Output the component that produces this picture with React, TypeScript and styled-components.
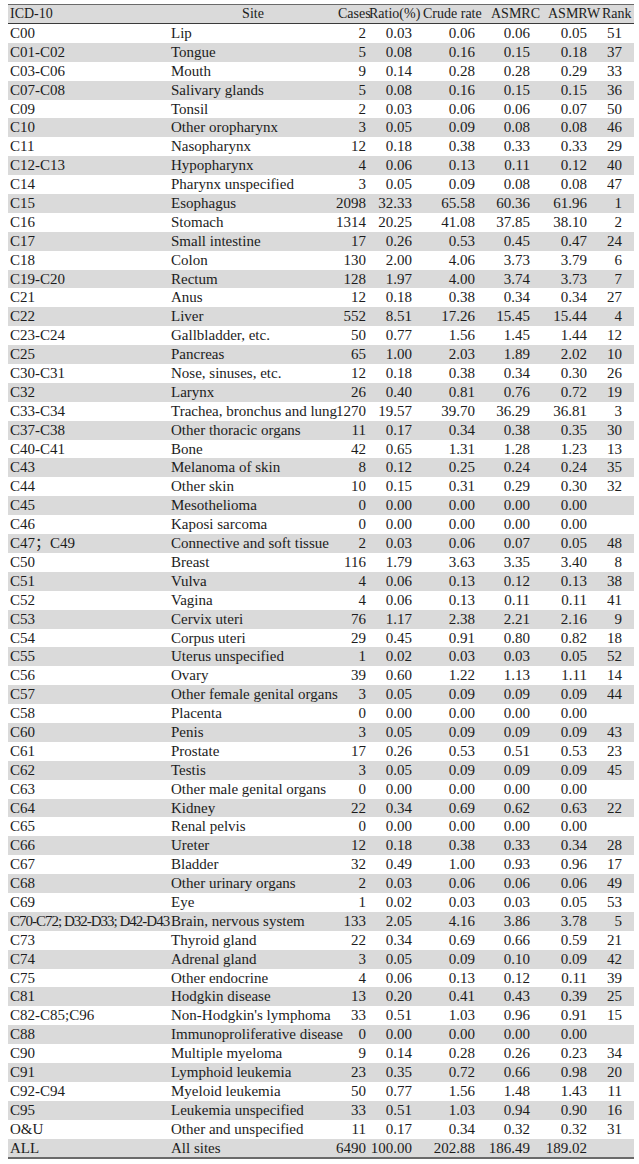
import React from "react";
import styled, { createGlobalStyle } from "styled-components";

const GlobalStyle = createGlobalStyle`
  html, body { margin: 0; padding: 0; background: #ffffff; }
  body { font-family: "Liberation Serif", "Times New Roman", "Noto Sans CJK SC", serif; color: #1c1c1c; }
`;

const COLS = "162px 166px 32px 46px 63px 55px 57px 45px";

const Page = styled.div`
  padding: 4px 5px 0 8px;
`;

const Table = styled.div`
  width: 626px;
  border-top: 1px solid #6a6a6a;
  border-bottom: 2px solid #6a6a6a;
`;

const HeadRow = styled.div`
  display: grid;
  grid-template-columns: ${COLS};
  height: 18px;
  line-height: 18px;
  background: #dadada;
  border-bottom: 1.5px solid #3a3a3a;
  font-size: 14px;
`;

const Row = styled.div<{ $shade: boolean }>`
  display: grid;
  grid-template-columns: ${COLS};
  height: 18.9px;
  line-height: 18.9px;
  background: ${(p) => (p.$shade ? "#dadada" : "#ffffff")};
  font-size: 15px;
`;

const Cell = styled.div<{ $align?: "left" | "right" | "center"; $pl?: number; $pr?: number; $tight?: boolean }>`
  white-space: nowrap;
  overflow: visible;
  text-align: ${(p) => p.$align ?? "left"};
  padding-left: ${(p) => p.$pl ?? 0}px;
  padding-right: ${(p) => p.$pr ?? 0}px;
  letter-spacing: ${(p) => (p.$tight ? "-1px" : "normal")};
  min-width: 0;
`;

type R = [string, string, string, string, string, string, string, string];

const rows: R[] = [
  ["C00", "Lip", "2", "0.03", "0.06", "0.06", "0.05", "51"],
  ["C01-C02", "Tongue", "5", "0.08", "0.16", "0.15", "0.18", "37"],
  ["C03-C06", "Mouth", "9", "0.14", "0.28", "0.28", "0.29", "33"],
  ["C07-C08", "Salivary glands", "5", "0.08", "0.16", "0.15", "0.15", "36"],
  ["C09", "Tonsil", "2", "0.03", "0.06", "0.06", "0.07", "50"],
  ["C10", "Other oropharynx", "3", "0.05", "0.09", "0.08", "0.08", "46"],
  ["C11", "Nasopharynx", "12", "0.18", "0.38", "0.33", "0.33", "29"],
  ["C12-C13", "Hypopharynx", "4", "0.06", "0.13", "0.11", "0.12", "40"],
  ["C14", "Pharynx unspecified", "3", "0.05", "0.09", "0.08", "0.08", "47"],
  ["C15", "Esophagus", "2098", "32.33", "65.58", "60.36", "61.96", "1"],
  ["C16", "Stomach", "1314", "20.25", "41.08", "37.85", "38.10", "2"],
  ["C17", "Small intestine", "17", "0.26", "0.53", "0.45", "0.47", "24"],
  ["C18", "Colon", "130", "2.00", "4.06", "3.73", "3.79", "6"],
  ["C19-C20", "Rectum", "128", "1.97", "4.00", "3.74", "3.73", "7"],
  ["C21", "Anus", "12", "0.18", "0.38", "0.34", "0.34", "27"],
  ["C22", "Liver", "552", "8.51", "17.26", "15.45", "15.44", "4"],
  ["C23-C24", "Gallbladder, etc.", "50", "0.77", "1.56", "1.45", "1.44", "12"],
  ["C25", "Pancreas", "65", "1.00", "2.03", "1.89", "2.02", "10"],
  ["C30-C31", "Nose, sinuses, etc.", "12", "0.18", "0.38", "0.34", "0.30", "26"],
  ["C32", "Larynx", "26", "0.40", "0.81", "0.76", "0.72", "19"],
  ["C33-C34", "Trachea, bronchus and lung", "1270", "19.57", "39.70", "36.29", "36.81", "3"],
  ["C37-C38", "Other thoracic organs", "11", "0.17", "0.34", "0.38", "0.35", "30"],
  ["C40-C41", "Bone", "42", "0.65", "1.31", "1.28", "1.23", "13"],
  ["C43", "Melanoma of skin", "8", "0.12", "0.25", "0.24", "0.24", "35"],
  ["C44", "Other skin", "10", "0.15", "0.31", "0.29", "0.30", "32"],
  ["C45", "Mesothelioma", "0", "0.00", "0.00", "0.00", "0.00", ""],
  ["C46", "Kaposi sarcoma", "0", "0.00", "0.00", "0.00", "0.00", ""],
  ["C47；C49", "Connective and soft tissue", "2", "0.03", "0.06", "0.07", "0.05", "48"],
  ["C50", "Breast", "116", "1.79", "3.63", "3.35", "3.40", "8"],
  ["C51", "Vulva", "4", "0.06", "0.13", "0.12", "0.13", "38"],
  ["C52", "Vagina", "4", "0.06", "0.13", "0.11", "0.11", "41"],
  ["C53", "Cervix uteri", "76", "1.17", "2.38", "2.21", "2.16", "9"],
  ["C54", "Corpus uteri", "29", "0.45", "0.91", "0.80", "0.82", "18"],
  ["C55", "Uterus unspecified", "1", "0.02", "0.03", "0.03", "0.05", "52"],
  ["C56", "Ovary", "39", "0.60", "1.22", "1.13", "1.11", "14"],
  ["C57", "Other female genital organs", "3", "0.05", "0.09", "0.09", "0.09", "44"],
  ["C58", "Placenta", "0", "0.00", "0.00", "0.00", "0.00", ""],
  ["C60", "Penis", "3", "0.05", "0.09", "0.09", "0.09", "43"],
  ["C61", "Prostate", "17", "0.26", "0.53", "0.51", "0.53", "23"],
  ["C62", "Testis", "3", "0.05", "0.09", "0.09", "0.09", "45"],
  ["C63", "Other male genital organs", "0", "0.00", "0.00", "0.00", "0.00", ""],
  ["C64", "Kidney", "22", "0.34", "0.69", "0.62", "0.63", "22"],
  ["C65", "Renal pelvis", "0", "0.00", "0.00", "0.00", "0.00", ""],
  ["C66", "Ureter", "12", "0.18", "0.38", "0.33", "0.34", "28"],
  ["C67", "Bladder", "32", "0.49", "1.00", "0.93", "0.96", "17"],
  ["C68", "Other urinary organs", "2", "0.03", "0.06", "0.06", "0.06", "49"],
  ["C69", "Eye", "1", "0.02", "0.03", "0.03", "0.05", "53"],
  ["C70-C72; D32-D33; D42-D43", "Brain, nervous system", "133", "2.05", "4.16", "3.86", "3.78", "5"],
  ["C73", "Thyroid gland", "22", "0.34", "0.69", "0.66", "0.59", "21"],
  ["C74", "Adrenal gland", "3", "0.05", "0.09", "0.10", "0.09", "42"],
  ["C75", "Other endocrine", "4", "0.06", "0.13", "0.12", "0.11", "39"],
  ["C81", "Hodgkin disease", "13", "0.20", "0.41", "0.43", "0.39", "25"],
  ["C82-C85;C96", "Non-Hodgkin's lymphoma", "33", "0.51", "1.03", "0.96", "0.91", "15"],
  ["C88", "Immunoproliferative disease", "0", "0.00", "0.00", "0.00", "0.00", ""],
  ["C90", "Multiple myeloma", "9", "0.14", "0.28", "0.26", "0.23", "34"],
  ["C91", "Lymphoid leukemia", "23", "0.35", "0.72", "0.66", "0.98", "20"],
  ["C92-C94", "Myeloid leukemia", "50", "0.77", "1.56", "1.48", "1.43", "11"],
  ["C95", "Leukemia unspecified", "33", "0.51", "1.03", "0.94", "0.90", "16"],
  ["O&U", "Other and unspecified", "11", "0.17", "0.34", "0.32", "0.32", "31"],
  ["ALL", "All sites", "6490", "100.00", "202.88", "186.49", "189.02", ""],
];

export default function App() {
  return (
    <>
      <GlobalStyle />
      <Page>
        <Table>
          <HeadRow>
            <Cell $pl={2}>ICD-10</Cell>
            <Cell $align="center">Site</Cell>
            <Cell $pl={2}>Cases</Cell>
            <Cell $pl={1}>Ratio(%)</Cell>
            <Cell $pl={9}>Crude rate</Cell>
            <Cell $pl={14}>ASMRC</Cell>
            <Cell $pl={16}>ASMRW</Cell>
            <Cell $pl={13}>Rank</Cell>
          </HeadRow>
          {rows.map((r, i) => (
            <Row key={r[0]} $shade={i % 2 === 1}>
              <Cell $pl={2} $tight={r[0].length > 20}>{r[0]}</Cell>
              <Cell $pl={1}>{r[1]}</Cell>
              <Cell $align="right" $pr={2}>{r[2]}</Cell>
              <Cell $align="right" $pr={2}>{r[3]}</Cell>
              <Cell $align="right" $pr={2}>{r[4]}</Cell>
              <Cell $align="right" $pr={2}>{r[5]}</Cell>
              <Cell $align="right" $pr={2}>{r[6]}</Cell>
              <Cell $align="right" $pr={12}>{r[7]}</Cell>
            </Row>
          ))}
        </Table>
      </Page>
    </>
  );
}
